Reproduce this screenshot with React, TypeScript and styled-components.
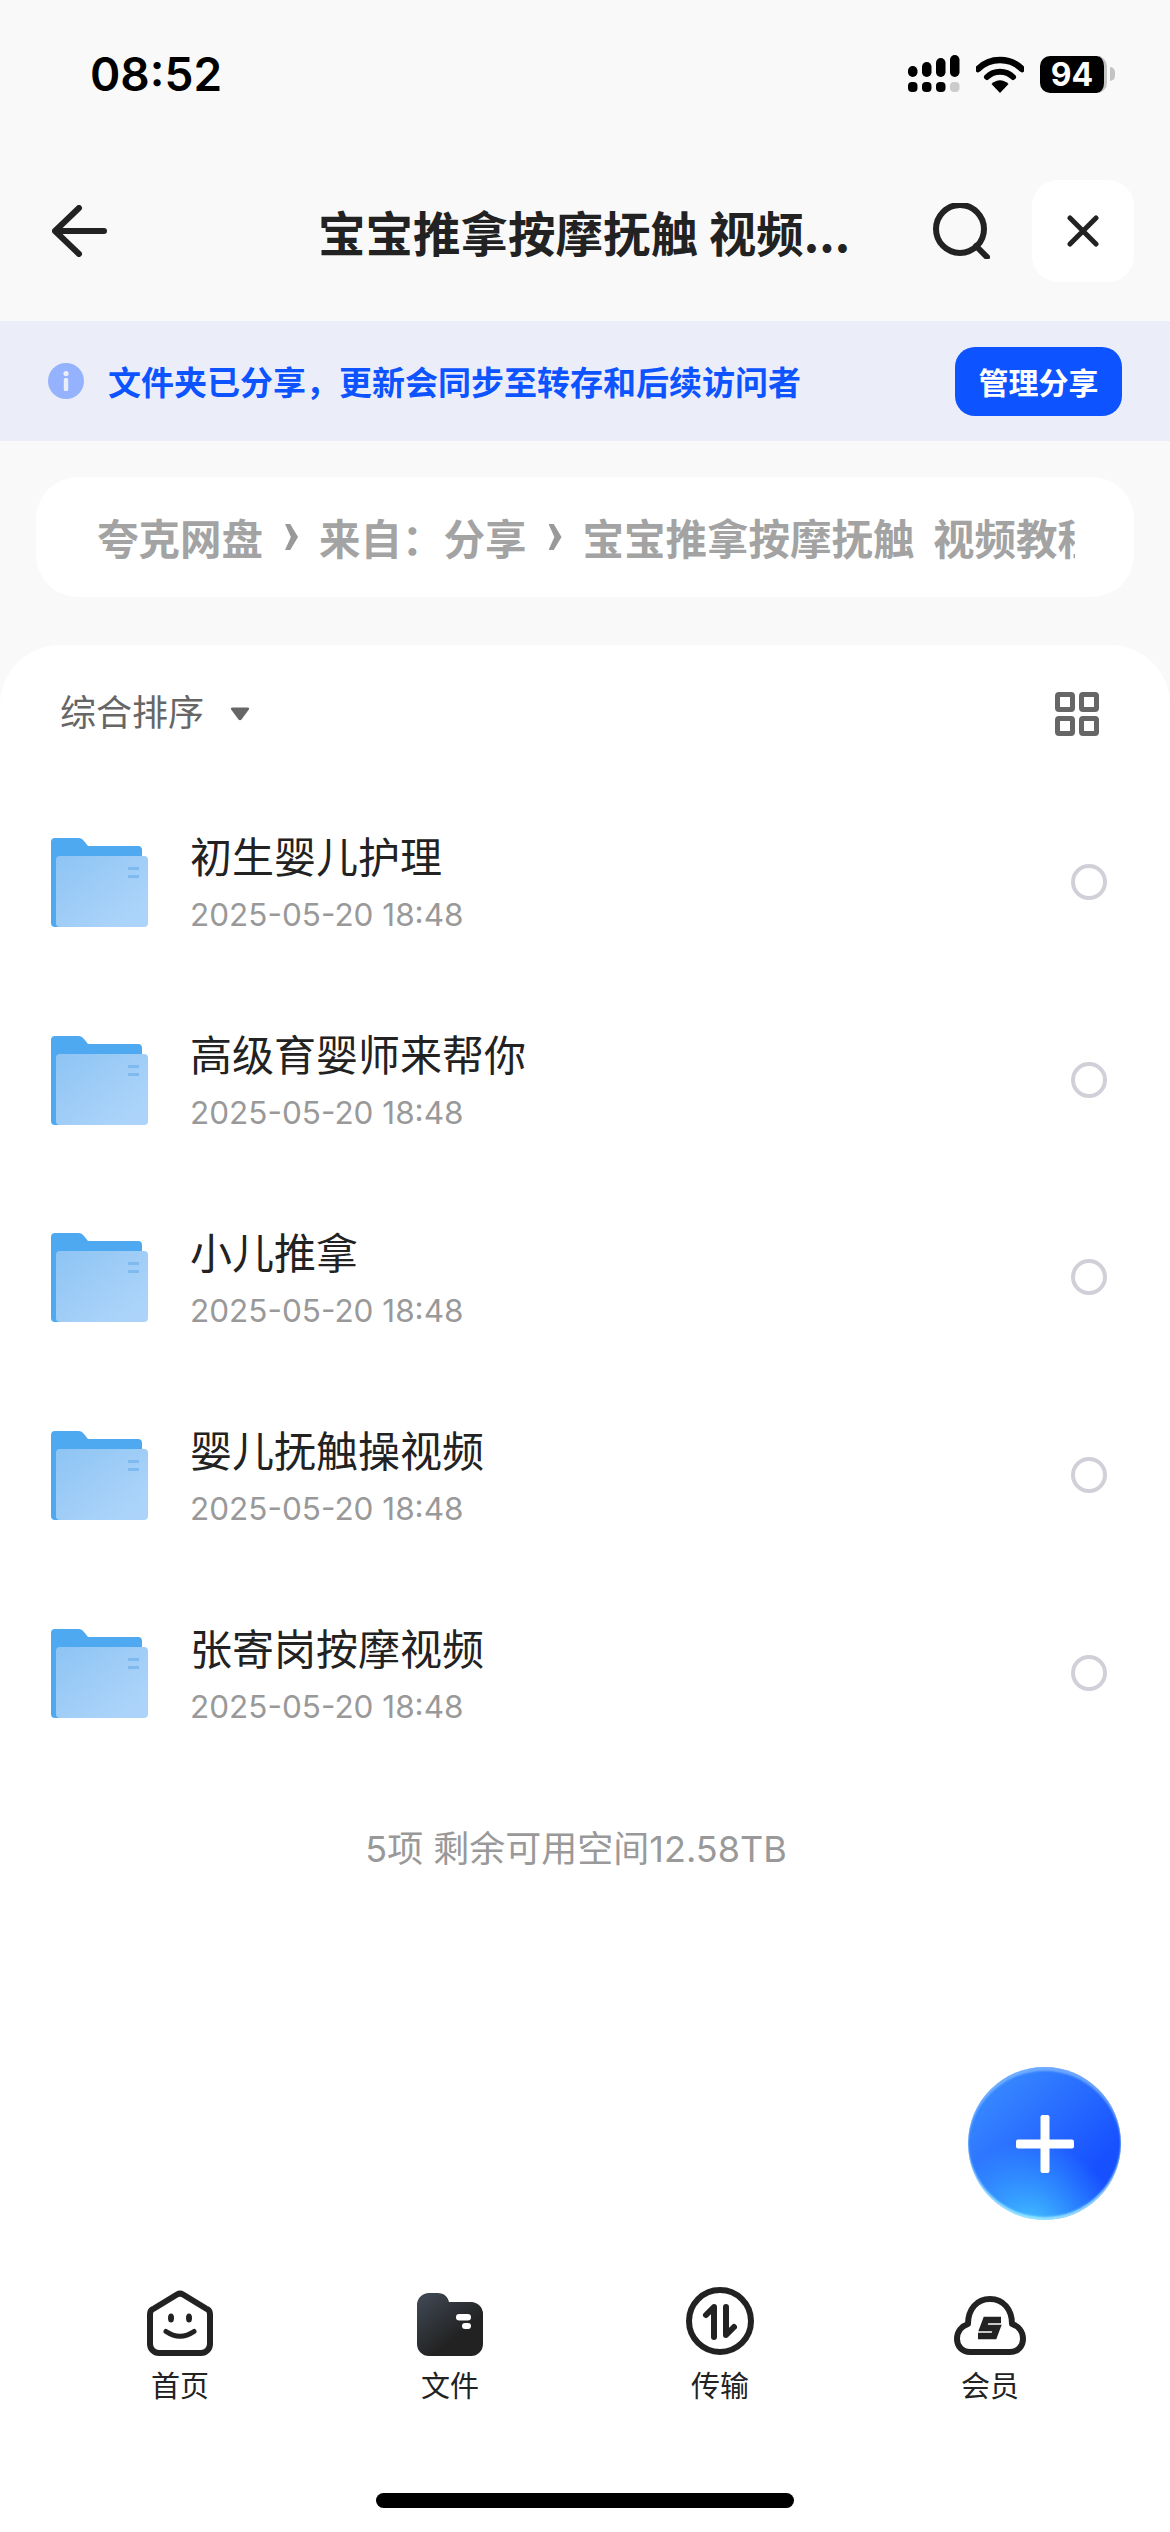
import styled, { createGlobalStyle } from "styled-components";

const latin = `Inter, "Noto Sans CJK SC", sans-serif`;
const cjk = `"Noto Sans CJK SC", "Noto Sans", sans-serif`;

const folders = [
  { name: "初生婴儿护理", date: "2025-05-20 18:48" },
  { name: "高级育婴师来帮你", date: "2025-05-20 18:48" },
  { name: "小儿推拿", date: "2025-05-20 18:48" },
  { name: "婴儿抚触操视频", date: "2025-05-20 18:48" },
  { name: "张寄岗按摩视频", date: "2025-05-20 18:48" },
];

const signalBars = [
  { x: 0, top: 11, h: 11 },
  { x: 14, top: 7, h: 15 },
  { x: 28, top: 3, h: 19 },
  { x: 42, top: 0, h: 22 },
];

const FolderIcon = ({ id }: { id: number }) => (
  <svg width="98" height="90" viewBox="0 0 98 90">
    <defs>
      <linearGradient id={`front${id}`} x1="0" y1="0" x2="1" y2="1">
        <stop offset="0" stopColor="#8ec4f3" />
        <stop offset="0.85" stopColor="#acd4fa" />
      </linearGradient>
    </defs>
    <path
      d="M1 5a4 4 0 0 1 4-4h24q3 0 5 3l4 5h50a4 4 0 0 1 4 4v70H10a9 9 0 0 1 0 7H5a4 4 0 0 1-4-4z"
      fill="#4fa9f1"
    />
    <rect x="6" y="19" width="92" height="71" rx="4" fill={`url(#front${id})`} />
    <rect x="78" y="30" width="11" height="3" fill="#7fb9ee" />
    <rect x="78" y="38" width="11" height="3" fill="#7fb9ee" />
  </svg>
);

const App = () => {
  return (
    <Screen>
      <GlobalStyle />
      <StatusBar>
        <Clock>08:52</Clock>
        <StatusIcons>
          <svg width="52" height="38" viewBox="0 0 52 38">
            {signalBars.map((b, i) => (
              <g key={i}>
                <rect x={b.x} y={b.top} width="9.5" height={b.h} rx="4.7" fill="#000" />
                <rect x={b.x} y="27" width="9.5" height="10" rx="4" fill={i === 3 ? "#ccc" : "#000"} />
              </g>
            ))}
          </svg>
          <svg width="48" height="37" viewBox="0 0 48 37">
            <path d="M2 13C14 1 34 1 46 13" fill="none" stroke="#000" strokeWidth="6.5" strokeLinecap="round" />
            <path d="M11 21C18 14 30 14 37 21" fill="none" stroke="#000" strokeWidth="6" strokeLinecap="round" />
            <path d="M15.5 28C21 23 27 23 32.5 28L24 37z" fill="#000" />
          </svg>
          <Battery>
            <BatteryBody>94</BatteryBody>
            <BatteryNub />
          </Battery>
        </StatusIcons>
      </StatusBar>

      <NavBar>
        <svg width="56" height="52" viewBox="0 0 56 52">
          <path d="M27 3L3 26L27 49M3 26H52" fill="none" stroke="#222" strokeWidth="6" strokeLinecap="round" strokeLinejoin="round" />
        </svg>
        <NavTitle>宝宝推拿按摩抚触 视频...</NavTitle>
        <svg width="58" height="56" viewBox="0 0 58 56">
          <circle cx="28" cy="26" r="24" fill="none" stroke="#222" strokeWidth="6" />
          <path d="M44 43L55 54" stroke="#222" strokeWidth="6" strokeLinecap="round" />
        </svg>
        <CloseButton>
          <svg width="32" height="32" viewBox="0 0 32 32">
            <path d="M3 3L29 29M29 3L3 29" stroke="#222" strokeWidth="5" strokeLinecap="round" />
          </svg>
        </CloseButton>
      </NavBar>

      <ShareBanner>
        <svg width="36" height="36" viewBox="0 0 36 36">
          <circle cx="18" cy="18" r="18" fill="#94b2fd" />
          <circle cx="18" cy="10.5" r="2.6" fill="#ebeef9" />
          <rect x="15.8" y="15" width="4.4" height="13" rx="1.5" fill="#ebeef9" />
        </svg>
        <BannerText>{"文件夹已分享\uFF0C更新会同步至转存和后续访问者"}</BannerText>
        <ManageButton>管理分享</ManageButton>
      </ShareBanner>

      <Breadcrumb>
        <CrumbTrack>
          <span>夸克网盘</span>
          <CrumbChevron />
          <span>{"来自\uFF1A分享"}</span>
          <CrumbChevron />
          <span>宝宝推拿按摩抚触 视频教程</span>
        </CrumbTrack>
      </Breadcrumb>

      <Sheet>
        <SortRow>
          <SortButton>
            <SortLabel>综合排序</SortLabel>
            <SortCaret width="20" height="14" viewBox="0 0 20 14">
              <path d="M2.5 0.5h15q2.5 0 1.2 2.2L11.5 12.5q-1.5 1.5-3 0L1.300 2.700Q0 0.500 2.500 0.500z" fill="#666" />
            </SortCaret>
          </SortButton>
          <svg width="44" height="44" viewBox="0 0 44 44">
            {[0, 24].map((x) =>
              [0, 24].map((y) => (
                <rect key={`${x}-${y}`} x={x + 2.5} y={y + 2.5} width="15" height="15" rx="1.500" fill="none" stroke="#666" strokeWidth="5" />
              )),
            )}
          </svg>
        </SortRow>

        {folders.map((f, i) => (
          <FileRow key={f.name}>
            <FolderIcon id={i} />
            <FileText>
              <FileName>{f.name}</FileName>
              <FileDate>{f.date}</FileDate>
            </FileText>
            <RadioMark />
          </FileRow>
        ))}

        <Summary>5项 剩余可用空间12.58TB</Summary>

        <Fab>
          <svg width="58" height="58" viewBox="0 0 58 58">
            <rect x="24.500" y="0" width="9" height="58" rx="2" fill="#fff" />
            <rect x="0" y="24.500" width="58" height="9" rx="2" fill="#fff" />
          </svg>
        </Fab>

        <TabBar>
          <TabItem>
            <TabIcon>
              <svg width="66" height="66" viewBox="0 0 66 66">
                <path d="M30 4.500a6 6 0 0 1 6 0L59 18.500a6 6 0 0 1 4 5.500V54a9 9 0 0 1-9 9H12a9 9 0 0 1-9-9V24a6 6 0 0 1 4-5.500z" fill="none" stroke="#222" strokeWidth="6" strokeLinejoin="round" />
                <ellipse cx="24" cy="28" rx="3" ry="4.500" fill="#222" />
                <ellipse cx="42" cy="28" rx="3" ry="4.500" fill="#222" />
                <path d="M19 41.500Q33 51 47 41.500" fill="none" stroke="#222" strokeWidth="5" strokeLinecap="round" />
              </svg>
            </TabIcon>
            <TabLabel>首页</TabLabel>
          </TabItem>
          <TabItem>
            <TabIcon>
              <svg width="66" height="63" viewBox="0 0 66 63">
                <defs>
                  <linearGradient id="tabFile" x1="0.1" y1="0.1" x2="0.6" y2="0.7">
                    <stop offset="0" stopColor="#3d4550" />
                    <stop offset="1" stopColor="#222" />
                  </linearGradient>
                </defs>
                <path d="M0 12A12 12 0 0 1 12 0H21Q28 0 31 6L32 9H54A12 12 0 0 1 66 21V51A12 12 0 0 1 54 63H12A12 12 0 0 1 0 51z" fill="url(#tabFile)" />
                <rect x="39" y="21" width="15" height="6.500" rx="3.200" fill="#fff" />
                <rect x="45" y="30" width="9" height="6" rx="3" fill="#fff" />
              </svg>
            </TabIcon>
            <TabLabel>文件</TabLabel>
          </TabItem>
          <TabItem>
            <TabIcon>
              <svg width="70" height="70" viewBox="0 0 70 70">
                <circle cx="35" cy="35" r="31" fill="none" stroke="#222" strokeWidth="6" />
                <path d="M29 51V21L21 29" fill="none" stroke="#222" strokeWidth="6" strokeLinecap="round" strokeLinejoin="round" />
                <path d="M41 21V49L49 41" fill="none" stroke="#222" strokeWidth="6" strokeLinecap="round" strokeLinejoin="round" />
              </svg>
            </TabIcon>
            <TabLabel>传输</TabLabel>
          </TabItem>
          <TabItem>
            <TabIcon>
              <svg width="72" height="60" viewBox="0 0 72 60">
                <path d="M16 56C8 56 3 50 3 43C3 35 8 30 14 28C14 13 23 3 36 3C49 3 58 13 58 28C64 30 69 35 69 43C69 50 64 56 56 56z" fill="none" stroke="#222" strokeWidth="6" strokeLinejoin="round" />
                <path d="M47 24H32L29 32H43L40 40H24" fill="none" stroke="#222" strokeWidth="6.500" />
              </svg>
            </TabIcon>
            <TabLabel>会员</TabLabel>
          </TabItem>
        </TabBar>

        <HomeIndicator />
      </Sheet>
    </Screen>
  );
};

export default App;

const GlobalStyle = createGlobalStyle`
  html, body {
    margin: 0;
    padding: 0;
    background: #fff;
  }
  * {
    box-sizing: border-box;
  }
`;

const Screen = styled.div`
  width: 1170px;
  height: 2532px;
  display: flex;
  flex-direction: column;
  background: #f9f9f9;
  font-family: ${cjk};
  overflow: hidden;
`;

const StatusBar = styled.div`
  height: 180px;
  padding: 55px 55px 0 90px;
  display: flex;
  justify-content: space-between;
  align-items: flex-start;
`;

const Clock = styled.div`
  font-family: ${latin};
  font-size: 46px;
  line-height: 38px;
  font-weight: 600;
  color: #000;
`;

const StatusIcons = styled.div`
  display: flex;
  align-items: center;
  gap: 16px;
`;

const Battery = styled.div`
  display: flex;
  align-items: center;
  gap: 3px;
`;

const BatteryBody = styled.div`
  width: 67px;
  height: 37px;
  border-radius: 10px;
  background: #000;
  border-right: 3px solid #c4c4c4;
  color: #fff;
  font-family: ${latin};
  font-size: 32px;
  font-weight: 700;
  line-height: 37px;
  text-align: center;
`;

const BatteryNub = styled.div`
  width: 5px;
  height: 14px;
  border-radius: 0 5px 5px 0;
  background: #c4c4c4;
`;

const NavBar = styled.div`
  height: 102px;
  padding: 0 36px 0 52px;
  display: grid;
  grid-template-columns: 56px 1fr 58px 144px;
  align-items: center;
`;

const NavTitle = styled.div`
  padding-left: 210px;
  font-size: 47.500px;
  font-weight: 700;
  color: #222;
  white-space: nowrap;
`;

const CloseButton = styled.div`
  width: 102px;
  height: 102px;
  border-radius: 26px;
  background: #fff;
  display: flex;
  align-items: center;
  justify-content: center;
  justify-self: end;
`;

const ShareBanner = styled.div`
  height: 120px;
  margin-top: 39px;
  padding: 0 48px;
  display: flex;
  align-items: center;
  background: #ebeef9;
`;

const BannerText = styled.div`
  margin-left: 24px;
  flex: 1;
  font-size: 33px;
  font-weight: 700;
  color: #0d53ff;
  white-space: nowrap;
`;

const ManageButton = styled.div`
  width: 167px;
  height: 69px;
  border-radius: 20px;
  background: #0d53ff;
  color: #fff;
  font-size: 30px;
  font-weight: 700;
  display: flex;
  align-items: center;
  justify-content: center;
`;

const Breadcrumb = styled.div`
  height: 120px;
  margin: 36px 36px 0;
  padding: 0 59px 0 61px;
  border-radius: 42px;
  background: #fff;
  display: flex;
  align-items: center;
  overflow: hidden;
`;

const CrumbTrack = styled.div`
  width: 100%;
  display: flex;
  align-items: center;
  overflow: hidden;
  white-space: nowrap;
  font-size: 41.500px;
  font-weight: 700;
  word-spacing: 9px;
  color: #a3a3a3;
`;

const CrumbChevron = styled.i`
  flex: none;
  width: 13px;
  height: 26px;
  margin: 0 21px 0 22px;
  background: #999;
  clip-path: polygon(0 0, 40% 0, 100% 50%, 40% 100%, 0 100%, 45% 50%);
`;

const Sheet = styled.div`
  position: relative;
  flex: 1;
  margin-top: 48px;
  display: flex;
  flex-direction: column;
  background: #fff;
  border-radius: 60px 60px 0 0;
`;

const SortRow = styled.div`
  height: 138px;
  padding: 0 71px 0 60px;
  display: flex;
  align-items: center;
  justify-content: space-between;
`;

const SortButton = styled.div`
  display: flex;
  align-items: center;
  font-size: 36px;
  color: #666;
`;

const SortLabel = styled.span`
  padding-bottom: 8px;
`;

const SortCaret = styled.svg`
  margin-left: 26px;
`;

const FileRow = styled.div`
  height: 197.800px;
  padding: 0 63px 0 50px;
  display: flex;
  align-items: center;
`;

const FileText = styled.div`
  flex: 1;
  margin-left: 42px;
`;

const FileName = styled.div`
  font-size: 42px;
  line-height: 50px;
  color: #222;
`;

const FileDate = styled.div`
  margin-top: 17px;
  font-family: ${latin};
  font-size: 31.500px;
  line-height: 36px;
  color: #999;
`;

const RadioMark = styled.div`
  width: 36px;
  height: 36px;
  border-radius: 50%;
  border: 4px solid #d0d0d8;
`;

const Summary = styled.div`
  margin-top: 46px;
  padding-right: 18px;
  text-align: center;
  font-family: ${latin};
  font-size: 36px;
  line-height: 62px;
  color: #999;
`;

const Fab = styled.div`
  position: absolute;
  right: 49px;
  top: 1422px;
  width: 153px;
  height: 153px;
  border-radius: 50%;
  background:
    radial-gradient(circle at 40% 108%, #45c8ff 0%, rgba(69, 200, 255, 0) 48%),
    linear-gradient(135deg, #3a8cff 10%, #1750ff 75%);
  box-shadow:
    inset 0 4px 2px rgba(150, 200, 255, 0.6),
    inset 0 -3px 2px rgba(170, 240, 255, 0.8);
  display: flex;
  align-items: center;
  justify-content: center;
`;

const TabBar = styled.div`
  margin-top: auto;
  padding: 0 45px;
  display: grid;
  grid-template-columns: repeat(4, 270px);
`;

const TabItem = styled.div`
  display: flex;
  flex-direction: column;
  align-items: center;
`;

const TabIcon = styled.div`
  height: 70px;
  display: flex;
  align-items: flex-end;
`;

const TabLabel = styled.div`
  margin-top: 8px;
  font-size: 29px;
  line-height: 40px;
  color: #222;
`;

const HomeIndicator = styled.div`
  width: 418px;
  height: 15px;
  margin: 89px auto 24px;
  border-radius: 8px;
  background: #000;
`;
